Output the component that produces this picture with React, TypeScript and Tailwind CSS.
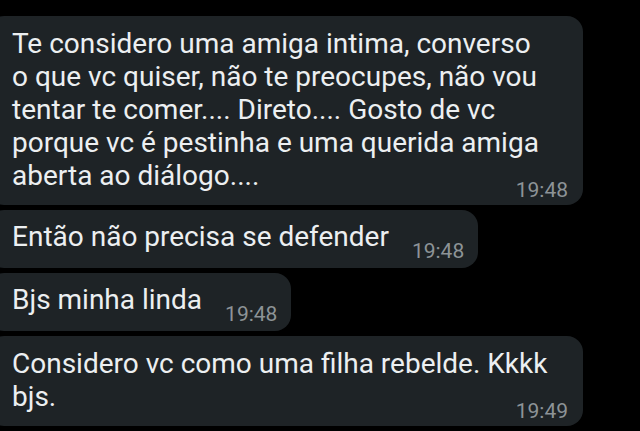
import React from 'react';

const font = { fontFamily: 'Roboto, "Noto Sans", sans-serif' };

function Time({ children, className = '' }: { children: React.ReactNode; className?: string }) {
  return (
    <span className={`text-[21px] leading-[20px] text-[#8d9397] whitespace-nowrap ${className}`}>
      {children}
    </span>
  );
}

// long messages: text block, time below on the right
function LongBubble({ lines, time }: { lines: string[]; time: string }) {
  return (
    <div className="-ml-3 w-[595px] rounded-[16px] bg-[#1e2326] pl-[24px] pr-[15px] pt-[11px] pb-[5px] flex flex-col">
      <p className="text-[28px] leading-[33px] text-[#eceff1]">
        {lines.map((l, i) => (
          <React.Fragment key={i}>
            {l}
            {i < lines.length - 1 && <br />}
          </React.Fragment>
        ))}
      </p>
      <Time className="self-end -mt-[12px]">{time}</Time>
    </div>
  );
}

// short messages: text and time side by side
function ShortBubble({ text, time }: { text: string; time: string }) {
  return (
    <div className="-ml-3 w-fit rounded-[16px] bg-[#1e2326] pl-[24px] pr-[14px] pt-[10px] pb-[7px] flex items-end gap-[23px]">
      <span className="text-[28px] leading-[33px] text-[#eceff1] mb-[8px] whitespace-nowrap">{text}</span>
      <Time>{time}</Time>
    </div>
  );
}

export default function App() {
  return (
    <div className="w-[640px] h-[431px] overflow-hidden bg-black pt-4 flex flex-col gap-[5px]" style={font}>
      <LongBubble
        lines={[
          'Te considero uma amiga intima, converso',
          'o que vc quiser, não te preocupes, não vou',
          'tentar te comer.... Direto.... Gosto de vc',
          'porque vc é pestinha e uma querida amiga',
          'aberta ao diálogo....',
        ]}
        time="19:48"
      />
      <ShortBubble text="Então não precisa se defender" time="19:48" />
      <ShortBubble text="Bjs minha linda" time="19:48" />
      <LongBubble lines={['Considero vc como uma filha rebelde. Kkkk', 'bjs.']} time="19:49" />
    </div>
  );
}
